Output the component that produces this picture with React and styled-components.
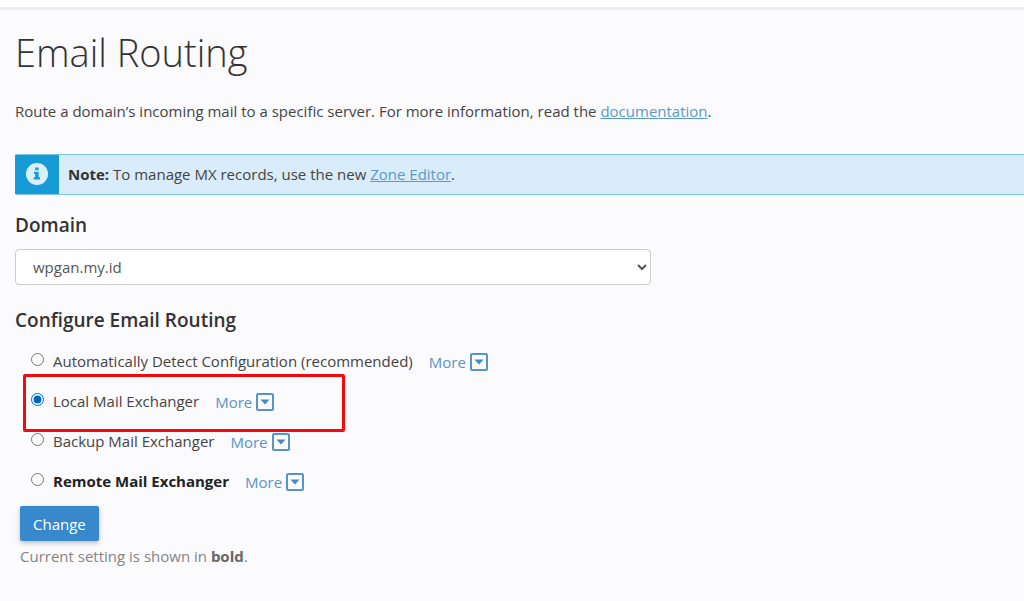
import React, { useState } from "react";
import styled, { createGlobalStyle } from "styled-components";

const domains = ["wpgan.my.id"];

const routes = [
  { id: "auto", label: "Automatically Detect Configuration (recommended)" },
  { id: "local", label: "Local Mail Exchanger", highlighted: true },
  { id: "secondary", label: "Backup Mail Exchanger" },
  { id: "remote", label: "Remote Mail Exchanger", current: true },
];

const App = () => {
  const [domain, setDomain] = useState(domains[0]);
  const [route, setRoute] = useState("local");

  const handleSubmit = (ev) => {
    ev.preventDefault();
  };

  return (
    <>
      <GlobalStyle />
      <TopBar />
      <Page>
        <Title>Email Routing</Title>
        <Description>
          Route a domain’s incoming mail to a specific server. For more
          information, read the <Link href="#documentation">documentation</Link>
          .
        </Description>
        <Callout>
          <CalloutIcon>
            <InfoIcon />
          </CalloutIcon>
          <CalloutText>
            <strong>Note:</strong> To manage MX records, use the new{" "}
            <Link href="#zone-editor">Zone Editor</Link>.
          </CalloutText>
        </Callout>
        <form onSubmit={handleSubmit}>
          <Heading>
            <label htmlFor="domain">Domain</label>
          </Heading>
          <Select
            id="domain"
            value={domain}
            onChange={(ev) => setDomain(ev.target.value)}
          >
            {domains.map((name) => (
              <option key={name}>{name}</option>
            ))}
          </Select>
          <Heading $spaced>Configure Email Routing</Heading>
          <Options>
            {routes.map(({ id, label, highlighted, current }) => (
              <Option key={id} $highlighted={highlighted}>
                <Radio
                  type="radio"
                  name="routing"
                  id={id}
                  checked={route === id}
                  onChange={() => setRoute(id)}
                />
                <OptionLabel htmlFor={id} $current={current}>
                  {label}
                </OptionLabel>
                <MoreButton type="button">
                  More
                  <CaretIcon />
                </MoreButton>
              </Option>
            ))}
          </Options>
          <Footer>
            <ChangeButton type="submit">Change</ChangeButton>
            <Hint>
              Current setting is shown in <strong>bold</strong>.
            </Hint>
          </Footer>
        </form>
      </Page>
    </>
  );
};

const InfoIcon = () => (
  <svg width="22" height="22" viewBox="0 0 22 22" aria-hidden="true">
    <circle cx="11" cy="11" r="11" fill="#d9f0fb" />
    <path
      fill="#179bd7"
      d="M9.2 4.4h3.4v2.8H9.2zM8 8.7h4.7v5.5H14v2.2H7.8v-2.2h1.4v-3.4H8z"
    />
  </svg>
);

const CaretIcon = () => (
  <svg width="18" height="18" viewBox="0 0 18 18" aria-hidden="true">
    <rect
      x="1"
      y="1"
      width="16"
      height="16"
      rx="1"
      fill="none"
      stroke="#5795c8"
      strokeWidth="2"
    />
    <path fill="#428bca" d="M4.4 6.6h9.2L9 11.6z" />
  </svg>
);

const GlobalStyle = createGlobalStyle`
  *,
  *::after {
    box-sizing: border-box;
  }
  body {
    margin: 0;
    background: #fbfafc;
    color: #444;
    font-family: "Open Sans", sans-serif;
    font-size: 15px;
    line-height: 22px;
  }
  strong {
    font-weight: 700;
  }
`;

const TopBar = styled.header`
  height: 10px;
  background: #fff;
  border-bottom: 3px solid #ededed;
`;

const Page = styled.main`
  padding: 16px 0 24px 15px;
`;

const Title = styled.h1`
  margin: 0;
  color: #333;
  font-size: 38px;
  font-weight: 300;
  line-height: 52px;
`;

const Description = styled.p`
  margin: 22px 0 32px;
`;

const Link = styled.a`
  color: #5a99c9;
  text-decoration: underline;
`;

const Callout = styled.div`
  display: flex;
  border: 1px solid #7fc4dc;
  border-right: 0;
  border-radius: 2px 0 0 2px;
  border-left-color: #179bd7;
  background: #d9ecfa;
`;

const CalloutIcon = styled.div`
  display: flex;
  flex: none;
  justify-content: center;
  width: 43px;
  padding: 8px 2px 8px 0;
  background: #179bd7;
`;

const CalloutText = styled.p`
  margin: 0;
  padding: 8px 9px 9px;

  strong {
    color: #333;
  }
`;

const Heading = styled.h2`
  margin: 0;
  padding: ${(props) => (props.$spaced ? "23px" : "18px")} 0 12px;
  color: #333;
  font-size: 19px;
  font-weight: 600;
  line-height: 24px;
`;

const Select = styled.select`
  display: block;
  width: 63%;
  height: 36px;
  padding: 6px 4px 6px 13px;
  border: 1px solid #ccc;
  border-radius: 4px;
  background-color: #fff;
  color: #555;
  font: inherit;
`;

const Options = styled.div`
  padding: 1px 0 1px 16px;
`;

const Option = styled.div`
  position: relative;
  display: flex;
  align-items: flex-start;
  height: 40px;
  padding-top: 5px;

  /* outline that reaches past the row on every side */
  ${(props) =>
    props.$highlighted &&
    `
    &::after {
      content: "";
      position: absolute;
      top: -11px;
      left: -8px;
      width: 322px;
      height: 58px;
      border: 3px solid #f4090d;
      border-radius: 2px;
      pointer-events: none;
    }
  `}
`;

const Radio = styled.input`
  width: 13px;
  height: 13px;
  margin: 3px 9px 0 0;
  accent-color: #0067c0;
`;

const OptionLabel = styled.label`
  color: ${(props) => (props.$current ? "#222" : "#444")};
  font-weight: ${(props) => (props.$current ? 700 : 400)};
`;

const MoreButton = styled.button`
  display: flex;
  align-items: center;
  gap: 4px;
  margin-left: 16px;
  padding: 1px 0;
  border: 0;
  background: none;
  color: #5795c8;
  font: inherit;
  cursor: pointer;
`;

const Footer = styled.div`
  padding-left: 5px;
`;

const ChangeButton = styled.button`
  display: block;
  height: 35px;
  padding: 0 13px;
  border: 0;
  border-radius: 2px;
  background: #3789cc;
  box-shadow: 0 2px 5px rgba(0, 0, 0, 0.25);
  color: #fff;
  font: inherit;
  cursor: pointer;
`;

const Hint = styled.p`
  margin: 4px 0 0;
  color: #858585;

  strong {
    color: #666;
  }
`;

export default App;
